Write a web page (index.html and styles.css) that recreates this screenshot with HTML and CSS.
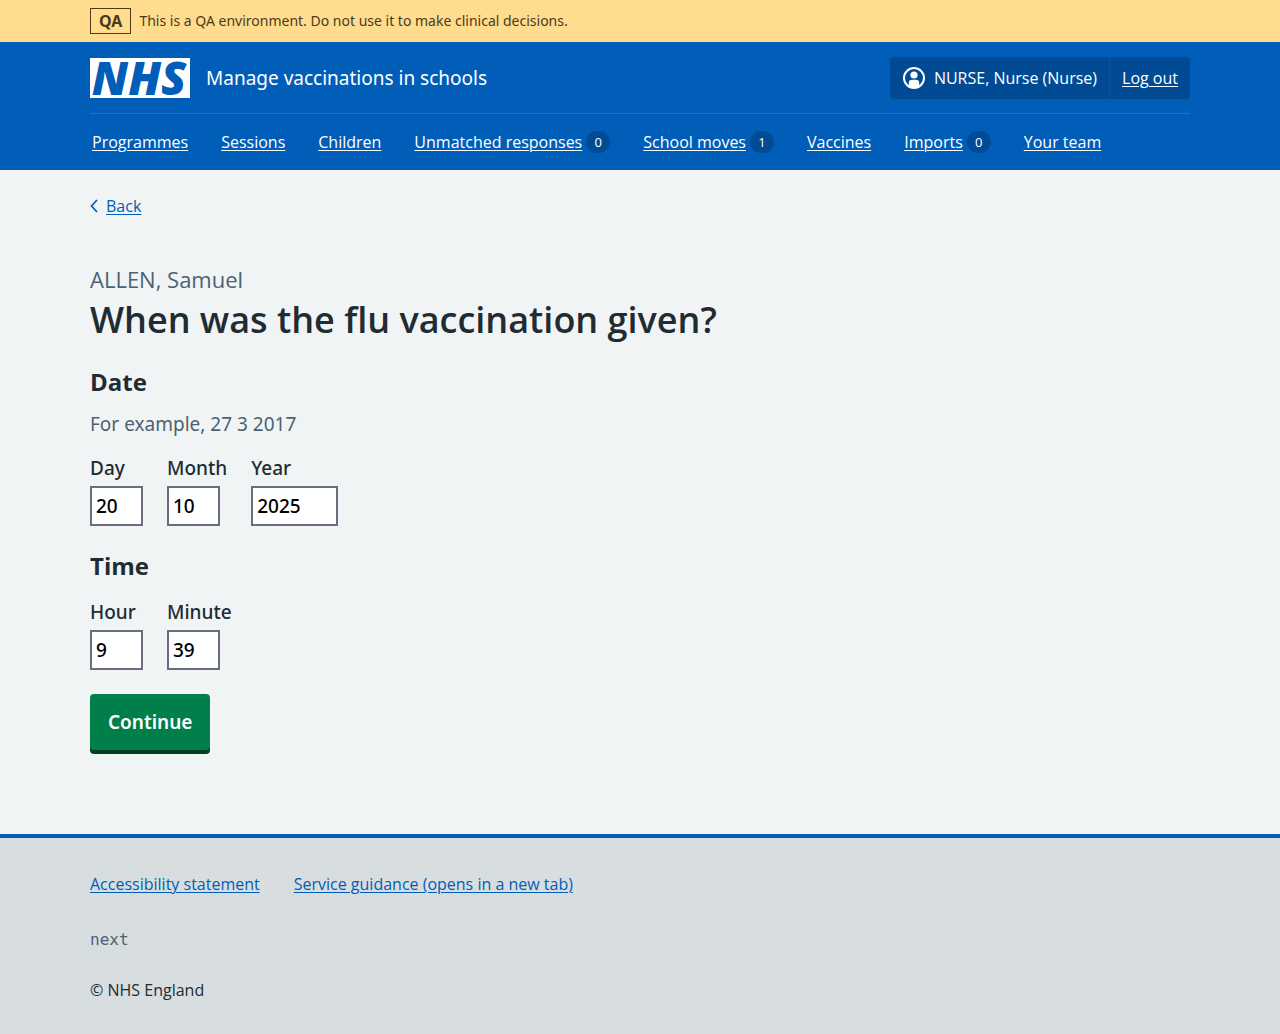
FILE: index.html
```html
<!DOCTYPE html>
<html lang="en">
<head>
<meta charset="utf-8">
<meta name="viewport" content="width=device-width, initial-scale=1">
<title>When was the flu vaccination given? - Manage vaccinations in schools</title>
<link rel="stylesheet" href="styles.css">
</head>
<body>
<div class="environment">
  <div class="container environment-inner">
    <strong class="environment-tag">QA</strong>
    <span>This is a QA environment. Do not use it to make clinical decisions.</span>
  </div>
</div>
<header class="header">
  <div class="container">
    <div class="header-top">
      <a class="brand" href="#">
        <svg class="logo" viewBox="0 0 100 40" role="img" aria-label="NHS">
          <rect width="100" height="40" fill="#fff"/>
          <text class="logo-text" x="49" y="37" text-anchor="middle">NHS</text>
        </svg>
        <span>Manage vaccinations in schools</span>
      </a>
      <div class="account">
        <div class="account-item">
          <svg class="user-icon" viewBox="0 0 24 24" aria-hidden="true">
            <circle cx="12" cy="12" r="10" fill="none" stroke="#fff" stroke-width="2"/>
            <circle cx="12" cy="9" r="3.6" fill="#fff"/>
            <path fill="#fff" d="M6.8 20.5V17a3.3 3.3 0 0 1 3.3-3.3h3.8a3.3 3.3 0 0 1 3.3 3.3v3.5A10 10 0 0 1 12 22a10 10 0 0 1-5.200-1.500z"/>
          </svg>
          <span>NURSE, Nurse (Nurse)</span>
        </div>
        <div class="account-item"><a href="#">Log out</a></div>
      </div>
    </div>
    <nav class="nav" aria-label="Menu">
      <ul class="nav-list">
        <li><a href="#">Programmes</a></li>
        <li><a href="#">Sessions</a></li>
        <li><a href="#">Children</a></li>
        <li><a href="#">Unmatched responses</a><span class="count">0</span></li>
        <li><a href="#">School moves</a><span class="count">1</span></li>
        <li><a href="#">Vaccines</a></li>
        <li><a href="#">Imports</a><span class="count">0</span></li>
        <li><a href="#">Your team</a></li>
      </ul>
    </nav>
  </div>
</header>
<div class="container page">
  <a class="back" href="#">
    <svg class="back-icon" viewBox="0 0 8 14" aria-hidden="true"><path d="M7 1 1.500 7 7 13" fill="none" stroke="currentColor" stroke-width="1.700"/></svg>
    <span>Back</span>
  </a>
  <main>
    <h1 class="title"><span class="caption">ALLEN, Samuel</span>When was the flu vaccination given?</h1>
    <form>
      <fieldset class="group" aria-describedby="date-hint">
        <legend class="legend">Date</legend>
        <p class="hint" id="date-hint">For example, 27 3 2017</p>
        <div class="fields">
          <div class="field"><label for="day">Day</label><input class="input" id="day" inputmode="numeric" value="20"></div>
          <div class="field"><label for="month">Month</label><input class="input" id="month" inputmode="numeric" value="10"></div>
          <div class="field"><label for="year">Year</label><input class="input input-year" id="year" inputmode="numeric" value="2025"></div>
        </div>
      </fieldset>
      <fieldset class="group">
        <legend class="legend">Time</legend>
        <div class="fields">
          <div class="field"><label for="hour">Hour</label><input class="input" id="hour" inputmode="numeric" value="9"></div>
          <div class="field"><label for="minute">Minute</label><input class="input" id="minute" inputmode="numeric" value="39"></div>
        </div>
      </fieldset>
      <button class="button" type="button">Continue</button>
    </form>
  </main>
</div>
<footer class="footer">
  <div class="container">
    <ul class="footer-links">
      <li><a href="#">Accessibility statement</a></li>
      <li><a href="#">Service guidance (opens in a new tab)</a></li>
    </ul>
    <p class="release">next</p>
    <p class="copyright">© NHS England</p>
  </div>
</footer>
</body>
</html>
```
FILE: styles.css
```css
* { box-sizing: border-box; }
body {
  margin: 0;
  min-height: 100vh;
  display: flex;
  flex-direction: column;
  background: #f0f4f5;
  color: #212b32;
  font: 16px/24px "Open Sans", "Noto Sans", sans-serif;
}
ul { margin: 0; padding: 0; list-style: none; }
p { margin: 0; }
a { color: #005eb8; text-underline-offset: 2px; text-decoration-thickness: 1px; }
.container { width: 100%; max-width: 1132px; margin: 0 auto; padding: 0 16px; }

.environment { background: #ffdc8e; color: #4d3a1a; font-family: "Noto Sans", sans-serif; font-size: 14px; }
.environment-inner { display: flex; align-items: center; gap: 8px; padding-top: 8px; padding-bottom: 8px; }
.environment-tag { border: 1px solid; padding: 0 8px; font-size: 16px; font-weight: 700; }

.header { background: #005eb8; color: #fff; }
.header a { color: #fff; }
.header-top { display: flex; justify-content: space-between; align-items: center; padding: 15px 0 14px; }
.brand { display: flex; align-items: center; gap: 16px; font-family: "Noto Sans", sans-serif; font-size: 19px; }
.header .brand { text-decoration: none; }
.logo { width: 100px; height: 40px; overflow: visible; }
.logo-text { fill: #005eb8; font: italic 800 46px "Open Sans", sans-serif; }
.account { display: flex; background: #004b93; border-radius: 4px; }
.account-item { display: flex; align-items: center; gap: 8px; padding: 9px 12px; }
.account-item + .account-item { border-left: 1px solid #0055a5; }
.user-icon { width: 24px; height: 24px; }
.nav { border-top: 1px solid #266fbf; padding: 16px 2px; }
.nav-list { display: flex; flex-wrap: wrap; column-gap: 33px; }
.nav-list li { display: flex; align-items: center; gap: 4px; }
.count { min-width: 24px; border-radius: 12px; background: #004b93; font-size: 13px; line-height: 22px; text-align: center; }

.page { flex: 1; padding-top: 24px; padding-bottom: 80px; }
.back { display: inline-flex; align-items: center; gap: 8px; }
.back-icon { width: 8px; height: 14px; }
main { padding-top: 44px; }
.title { margin: 0 0 25px; font-size: 36px; line-height: 42px; font-weight: 600; }
.caption { display: block; margin-bottom: 4px; color: #4c6272; font-size: 22px; line-height: 32px; font-weight: 400; }
.group { border: 0; margin: 0 0 24px; padding: 0; }
.legend { padding: 0; margin-bottom: 12px; font-size: 24px; line-height: 32px; font-weight: 700; }
.hint { margin-bottom: 12px; color: #4c6272; font: 19px/28px "Noto Sans", sans-serif; }
.fields { display: flex; gap: 24px; padding-top: 4px; font: 500 19px/28px "Noto Sans", sans-serif; }
.field { display: flex; flex-direction: column; align-items: flex-start; gap: 4px; min-width: 53px; }
.input { width: 53px; height: 40px; padding: 4px; border: 2px solid #696d7d; border-radius: 0; background: #fff; color: #000; font: inherit; }
.input-year { width: 87px; }
.button { border: 0; border-radius: 4px; padding: 14px 18px; margin-bottom: 4px; background: #007f4a; color: #fff; box-shadow: 0 4px 0 #00401e; font: 600 19px/28px "Noto Sans", sans-serif; }

.footer { border-top: 4px solid #005eb8; background: #d8dde0; padding: 34px 0 32px; }
.footer-links { display: flex; flex-wrap: wrap; gap: 8px 34px; margin-bottom: 32px; }
.release { margin-bottom: 26px; color: #4c6272; font-family: "DejaVu Sans Mono", monospace; }
```
